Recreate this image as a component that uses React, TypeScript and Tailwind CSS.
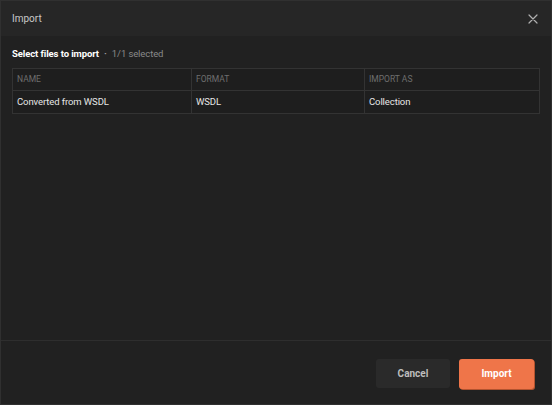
import React from "react";

export default function App() {
  return (
    <div
      className="w-[552px] h-[405px] bg-[#212121] border border-[#303030] flex flex-col text-[9.5px] overflow-hidden"
      style={{ fontFamily: "Roboto, 'Liberation Sans', sans-serif" }}
    >
      <div className="h-[35px] shrink-0 bg-[#262626] flex items-center justify-between pl-[11px] pr-[13px]">
        <span className="text-[#c8c8c8] text-[10px]">Import</span>
        <svg width="10" height="10" viewBox="0 0 10 10" className="text-[#b0b0b0]">
          <path d="M1 1L9 9M9 1L1 9" stroke="currentColor" strokeWidth="1.2" strokeLinecap="round" />
        </svg>
      </div>
      <div className="flex-1 px-[11px] pt-[12px]">
        <div className="flex items-center h-[12px] gap-[5px]">
          <span className="text-white font-bold text-[9.5px] tracking-[-0.1px]">Select files to import</span>
          <span className="text-[#9a9a9a] font-bold">·</span>
          <span className="text-[#8a8a8a] tracking-[-0.1px]">1/1 selected</span>
        </div>
        <div className="mt-[8px] border border-[#333333] bg-[#1e1e1e]">
          <div className="grid grid-cols-[179px_173px_1fr] h-[22px] text-[#6e6e6e] text-[8.5px] border-b border-[#333333]">
            <div className="flex items-center px-[4px] border-r border-[#333333]">NAME</div>
            <div className="flex items-center px-[4px] border-r border-[#333333]">FORMAT</div>
            <div className="flex items-center px-[4px]">IMPORT AS</div>
          </div>
          <div className="grid grid-cols-[179px_173px_1fr] h-[22px] text-[#e6e6e6] tracking-[-0.1px]">
            <div className="flex items-center px-[4px] border-r border-[#333333]">Converted from WSDL</div>
            <div className="flex items-center px-[4px] border-r border-[#333333]">WSDL</div>
            <div className="flex items-center px-[4px]">Collection</div>
          </div>
        </div>
      </div>
      <div className="h-[64px] shrink-0 border-t border-[#2e2e2e] flex items-center justify-end gap-[9px] pr-[17px] pt-[2px]">
        <button className="w-[74px] h-[29px] rounded-[3px] bg-[#2a2a2a] text-[#bdbdbd] font-bold text-[10px]">
          Cancel
        </button>
        <button className="w-[75px] h-[30px] rounded-[3px] bg-[#ef7549] text-white font-bold text-[10px] shadow-[1px_1px_0_#b3532f]">
          Import
        </button>
      </div>
    </div>
  );
}
